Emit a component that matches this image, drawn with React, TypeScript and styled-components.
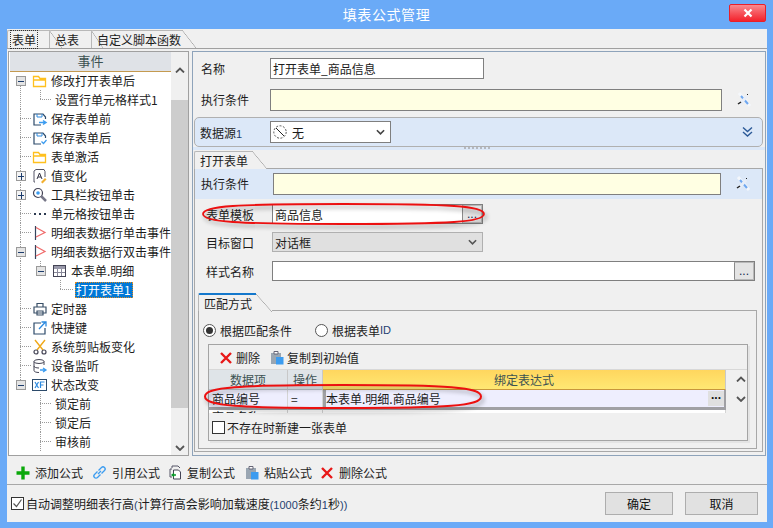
import React from 'react';
import styled, { createGlobalStyle } from 'styled-components';

const GlobalStyle = createGlobalStyle`
  html, body { margin: 0; padding: 0; background: #f0f0f0; }
  body { font-family: "Noto Sans CJK SC", "Liberation Sans", sans-serif; font-size: 12px; color: #1c1c1c; }
  * { box-sizing: border-box; }
`;

const Window = styled.div`
  width: 773px;
  height: 528px;
  background: #6aaaf7;
  display: flex;
  flex-direction: column;
  overflow: hidden;
`;
const TitleBar = styled.div`
  height: 29px;
  flex: none;
  display: flex;
  align-items: flex-start;
  justify-content: center;
  position: relative;
  color: #fff;
  font-size: 14px;
  line-height: 28px;
  letter-spacing: 0.6px;
`;
const CloseButton = styled.div`
  position: absolute;
  left: 729px;
  top: 4px;
  width: 37px;
  height: 18px;
  border: 1px solid #e8202a;
  border-radius: 2px;
  background: linear-gradient(#f98a8f, #f6545b 50%, #f4222c);
  display: flex;
  align-items: center;
  justify-content: center;
`;
const Client = styled.div`
  width: 760px;
  height: 493px;
  margin-left: 7px;
  background: #f0f0f0;
  display: flex;
  flex-direction: column;
`;
const TabStrip = styled.div`
  height: 20px;
  flex: none;
  display: flex;
  align-items: flex-end;
  border-bottom: 1px solid #a0a0a0;
`;
const Tab = styled.div<{ $w: number; $slant?: number; $accent?: boolean }>`
  width: ${(p) => p.$w}px;
  height: 18px;
  flex: none;
  position: relative;
  padding-left: 5px;
  line-height: 18px;
  white-space: nowrap;
  border-left: 1px solid #b8b8b8;
  border-top: ${(p) => (p.$accent ? '2px solid #1478cc' : '1px solid #b8b8b8')};
  border-top-left-radius: 2px;
  &::after {
    content: '';
    position: absolute;
    right: -${(p) => p.$slant ?? 16}px;
    top: -1px;
    width: ${(p) => p.$slant ?? 16}px;
    height: 18px;
    background: linear-gradient(to top right, transparent calc(50% - 0.6px), #a8a8a8 50%, transparent calc(50% + 0.6px));
  }
`;
const FocusText = styled.span`
  outline: 1px dotted #333;
  padding: 0 1px;
  margin-left: -2px;
`;
const Main = styled.div`
  height: 405px;
  flex: none;
  margin-top: 2px;
  padding: 0 1px;
  display: flex;
  gap: 3px;
`;
const TreePanel = styled.div`
  width: 181px;
  flex: none;
  border: 1px solid #a0a0a0;
  background: #fff;
  display: flex;
  overflow: hidden;
`;
const TreeColumn = styled.div`
  width: 162px;
  flex: none;
  overflow: hidden;
`;
const TreeHeader = styled.div`
  height: 20px;
  margin-left: 1px;
  margin-bottom: -1px;
  background: #dfe2e7;
  border-bottom: 1px solid #c49a50;
  text-align: center;
  line-height: 18px;
  color: #3c5252;
  font-size: 13px;
`;
const TreeRow = styled.div`
  height: 19px;
  display: flex;
  align-items: center;
  white-space: nowrap;
`;
const IconSlot = styled.span`
  width: 19px;
  height: 19px;
  flex: none;
  display: flex;
  align-items: center;
`;
const Selected = styled.span`
  background: #0078d7;
  color: #fff;
  outline: 1px dotted #e08a20;
  outline-offset: -1px;
  height: 16px;
  line-height: 16px;
  padding: 0 2px 0 1px;
`;
const ScrollBar = styled.div`
  flex: 1;
  background: #f0f0f0;
  display: flex;
  flex-direction: column;
  align-items: center;
`;
const ScrollUp = styled.div`
  height: 48px;
  flex: none;
  padding-top: 7px;
`;
const ScrollThumb = styled.div`
  height: 308px;
  width: 100%;
  flex: none;
  background: #cdcdcd;
`;
const ScrollDown = styled.div`
  flex: 1;
  display: flex;
  align-items: flex-end;
  padding-bottom: 4px;
`;
const RightPanel = styled.div`
  flex: none;
  width: 574px;
  border: 1px solid #8ea3ba;
  padding-top: 6px;
  display: flex;
  flex-direction: column;
`;
const FormRow = styled.div<{ $top?: number; $left?: number }>`
  display: flex;
  align-items: center;
  position: relative;
  margin-top: ${(p) => p.$top ?? 0}px;
  padding-left: ${(p) => p.$left ?? 8}px;
`;
const Label = styled.div<{ $w: number; $lift?: boolean }>`
  width: ${(p) => p.$w}px;
  flex: none;
  white-space: nowrap;
  margin-top: ${(p) => (p.$lift ? -2 : 0)}px;
`;
const Latin = styled.span`
  font-family: "Liberation Sans", sans-serif;
  font-size: 11px;
  color: #1f3f70;
`;
const Field = styled.div<{ $w: number; $h?: number; $tone?: 'note' | 'plain' | 'off' }>`
  width: ${(p) => p.$w}px;
  height: ${(p) => p.$h ?? 21}px;
  flex: none;
  border: 1px solid ${(p) => (p.$tone === 'off' ? '#b0b0b0' : '#7f7f7f')};
  background: ${(p) => (p.$tone === 'note' ? '#ffffe3' : p.$tone === 'off' ? '#e0e0e0' : '#fff')};
  display: flex;
  align-items: center;
  padding-left: 2px;
  justify-content: space-between;
  white-space: nowrap;
`;
const MoreButton = styled.div`
  width: 20px;
  height: 100%;
  flex: none;
  background: #e4e4e4;
  border: 1px solid #b8b8b8;
  border-left-color: #8a8a8a;
  text-align: center;
  line-height: 17px;
  font-family: "Liberation Sans", sans-serif;
  font-size: 12px;
  color: #12284c;
`;
const WandSlot = styled.span`
  margin-left: 14px;
  display: flex;
`;
const BlueStrip = styled.div`
  margin-top: 6px;
  padding: 0 2px 3px 1px;
  background: linear-gradient(#f0f0f0 30px, #dce8f8 30px);
  position: relative;
`;
const DataBand = styled.div`
  height: 30px;
  border: 1px solid #b0b0b0;
  border-radius: 5px;
  background: #dce8f8;
  display: flex;
  align-items: center;
  padding-left: 5px;
  padding-right: 8px;
  justify-content: space-between;
`;
const BandLeft = styled.div`
  display: flex;
  align-items: center;
`;
const Splitter = styled.div`
  position: absolute;
  left: 271px;
  bottom: 0;
  width: 26px;
  height: 3px;
  border-top: 2px dotted #b4b8c0;
`;
const ComboText = styled.span`
  display: flex;
  align-items: center;
  gap: 5px;
`;
const ComboArrow = styled.span`
  display: flex;
  padding-right: 5px;
`;
const TabArea = styled.div`
  flex: 1;
  margin: 0 2px 3px 1px;
  display: flex;
  flex-direction: column;
`;
const TabHead = styled.div`
  height: 19px;
  flex: none;
  display: flex;
  align-items: flex-end;
`;
const TabLine = styled.div<{ $gap: number }>`
  flex: 1;
  height: 1px;
  margin-left: ${(p) => p.$gap}px;
  background: #a8a8a8;
`;
const TabBody = styled.div`
  flex: 1;
  border: 1px solid #a8a8a8;
  border-top: none;
  display: flex;
  flex-direction: column;
  min-height: 0;
`;
const NoteBand = styled.div`
  height: 30px;
  flex: none;
  background: #dce8f8;
  display: flex;
  align-items: center;
  padding-left: 6px;
`;
const SubArea = styled.div`
  margin: 11px 5px 2px 3px;
  flex: 1;
  display: flex;
  flex-direction: column;
  min-height: 0;
`;
const SubBody = styled.div`
  flex: 1;
  border: 1px solid #a8a8a8;
  border-top: none;
  padding: 11px 8px 7px 9px;
  display: flex;
  flex-direction: column;
`;
const RadioRow = styled.div`
  height: 16px;
  flex: none;
  margin-left: -5px;
  display: flex;
  align-items: center;
`;
const Radio = styled.span<{ $on?: boolean; $gap?: number }>`
  width: 13px;
  height: 13px;
  flex: none;
  border-radius: 50%;
  border: 1px solid #555;
  background: #fff;
  position: relative;
  margin-left: ${(p) => p.$gap ?? 0}px;
  margin-right: 4px;
  &::after {
    content: '';
    display: ${(p) => (p.$on ? 'block' : 'none')};
    position: absolute;
    left: 2px;
    top: 2px;
    width: 7px;
    height: 7px;
    border-radius: 50%;
    background: #333;
  }
`;
const InnerBox = styled.div`
  margin-top: 6px;
  height: 97px;
  flex: none;
  border: 1px solid #a4a4a4;
  box-shadow: 2px 2px 0 #e4e4e4;
  display: flex;
  flex-direction: column;
`;
const GridBar = styled.div`
  height: 24px;
  flex: none;
  padding: 1px 0 0 10px;
  display: flex;
  align-items: center;
`;
const BarItem = styled.span<{ $gap?: number }>`
  display: flex;
  align-items: center;
  gap: 3px;
  margin-left: ${(p) => p.$gap ?? 0}px;
  white-space: nowrap;
`;
const GridWrap = styled.div`
  height: 44px;
  flex: none;
  display: flex;
  position: relative;
  border-top: 1px solid #d8d8d8;
`;
const GridTable = styled.div`
  width: 517px;
  flex: none;
  background: #fff;
  overflow: hidden;
  display: grid;
  grid-template-columns: 79px 35px 403px;
  grid-template-rows: 20px 20px 20px;
`;
const HeadCell = styled.div<{ $hot?: boolean }>`
  background: ${(p) => (p.$hot ? 'linear-gradient(#ffd65e, #ffe873)' : '#dfe4e8')};
  border-right: 1px solid #c8c8c8;
  border-bottom: 1px solid ${(p) => (p.$hot ? '#c8963c' : '#b8c0c8')};
  text-align: center;
  line-height: 19px;
  color: #3c5252;
`;
const BodyCell = styled.div<{ $active?: boolean }>`
  background: #eeeefe;
  border-right: 1px solid #d4d4d4;
  border-bottom: 3px solid #a0a0a4;
  padding-left: ${(p) => (p.$active ? 0 : 3)}px;
  line-height: 17px;
  display: flex;
  justify-content: space-between;
  ${(p) => p.$active && 'border-left: 3px solid #a0a0a4; border-right: 2px solid #a0a0a4;'}
`;
const CellMore = styled.div`
  width: 16px;
  height: 15px;
  margin-top: 1px;
  background: #e0e0e0;
  color: #111;
  text-align: center;
  font: bold 12px/8px "Liberation Sans", sans-serif;
`;
const PeekCell = styled.div`
  border-right: 1px solid #d4d4d4;
  line-height: 13px;
  padding-left: 3px;
`;
const GridScroll = styled.div`
  width: 22px;
  flex: none;
  display: flex;
  flex-direction: column;
  align-items: center;
  padding: 6px 0 0 8px;
  gap: 14px;
`;
const CheckRow = styled.div<{ $left?: number; $top?: number }>`
  display: flex;
  align-items: center;
  margin-top: ${(p) => p.$top ?? 0}px;
  padding-left: ${(p) => p.$left ?? 0}px;
  white-space: nowrap;
  gap: 2px;
`;
const CheckBox = styled.span`
  width: 13px;
  height: 13px;
  flex: none;
  border: 1px solid #333;
  background: #fff;
  display: flex;
`;
const ActionBar = styled.div`
  height: 29px;
  flex: none;
  padding-left: 9px;
  padding-top: 5px;
  display: flex;
  align-items: center;
  border-bottom: 1px solid #a8a8a8;
`;
const Action = styled.span<{ $w: number }>`
  width: ${(p) => p.$w}px;
  flex: none;
  display: flex;
  align-items: center;
  gap: 5px;
  white-space: nowrap;
`;
const Footer = styled.div`
  flex: 1;
  display: flex;
  align-items: center;
  padding: 0 9px 0 4px;
  justify-content: space-between;
`;
const FooterButtons = styled.div`
  display: flex;
  gap: 12px;
`;
const Button = styled.div<{ $w: number }>`
  width: ${(p) => p.$w}px;
  height: 23px;
  border: 1px solid #adadad;
  background: #e1e1e1;
  text-align: center;
  line-height: 21px;
  color: #111;
`;
const Ring = styled.svg<{ $x: number; $y: number }>`
  position: absolute;
  left: ${(p) => p.$x}px;
  top: ${(p) => p.$y}px;
  pointer-events: none;
  overflow: visible;
  filter: drop-shadow(2px 3px 2px rgba(0, 0, 0, 0.35));
`;

type IconName = 'folder' | 'saveIn' | 'saveOk' | 'value' | 'tool' | 'dots' | 'flag' | 'grid' | 'timer' | 'jump' | 'scissors' | 'db' | 'xf';

const Glyph = ({ name }: { name: IconName }) => {
  const common = { width: 16, height: 16, viewBox: '0 0 16 16', fill: 'none' as const };
  switch (name) {
    case 'folder':
      return (
        <svg {...common}>
          <path d="M1.500 13.500V3.500h5l1.500 2h5.500v8zM1.500 7h12" stroke="#ffc01e" strokeWidth="1.300" />
        </svg>
      );
    case 'saveIn':
    case 'saveOk':
      return (
        <svg {...common}>
          <path d="M9 14H2V3h9l2.500 3v2" stroke="#2c4a6a" strokeWidth="1.200" />
          <path d="M5 3v3h5V3" stroke="#2c8ae0" />
          {name === 'saveIn' ? (
            <path d="M7 11.500h6M11 9.500l3 2-3 2" stroke="#3c9cf0" strokeWidth="1.500" />
          ) : (
            <path d="M9.500 11.500l2 2 3-3.500" stroke="#3c9cf0" strokeWidth="1.200" />
          )}
        </svg>
      );
    case 'value':
      return (
        <svg {...common}>
          <path d="M3 14H2V3l2-1.500h8l1 2V9" stroke="#556" />
          <path d="M5 11l2.500-6 2.500 6M6 9h3" stroke="#334" />
          <path d="M9 14l4-4 1.500 1.500-4 4z" fill="#f2b030" />
        </svg>
      );
    case 'tool':
      return (
        <svg {...common}>
          <circle cx="6" cy="6" r="4.500" stroke="#445" strokeWidth="1.200" />
          <circle cx="6" cy="6" r="1.800" fill="#3c9cf0" />
          <path d="M9 9l5 5" stroke="#778" strokeWidth="2.500" />
        </svg>
      );
    case 'dots':
      return (
        <svg {...common}>
          <path d="M2 8h2M7 8h2M12 8h2" stroke="#2c3a50" strokeWidth="2" />
        </svg>
      );
    case 'flag':
      return (
        <svg {...common}>
          <path d="M3.500 1v14" stroke="#35445c" strokeWidth="1.200" />
          <path d="M4 2.500L13 7.500 4 12" stroke="#f06a6a" strokeWidth="1.200" />
        </svg>
      );
    case 'grid':
      return (
        <svg {...common} shapeRendering="crispEdges">
          <rect x="1.500" y="2.500" width="12" height="11" stroke="#445" />
          <rect x="2" y="3" width="11" height="2.500" fill="#99a" />
          <path d="M5.500 6v7M9.500 6v7M2 9.500h11" stroke="#889" />
        </svg>
      );
    case 'timer':
      return (
        <svg {...common}>
          <path d="M2 6h12v6H2zM5 6V2.500h6V6M5 10h6v4H5z" stroke="#3a5068" strokeWidth="1.200" />
        </svg>
      );
    case 'jump':
      return (
        <svg {...common}>
          <path d="M9 3H2v11h11V8" stroke="#2c4a6a" strokeWidth="1.200" />
          <path d="M7 9l6.500-7M9.500 2h4.500v4.500" stroke="#2c8ae0" strokeWidth="1.300" />
        </svg>
      );
    case 'scissors':
      return (
        <svg {...common}>
          <path d="M3 1l8 10M13 1L5 11" stroke="#f0a818" strokeWidth="1.400" />
          <circle cx="4" cy="13" r="2" stroke="#445" strokeWidth="1.200" />
          <circle cx="12" cy="13" r="2" stroke="#445" strokeWidth="1.200" />
        </svg>
      );
    case 'db':
      return (
        <svg {...common}>
          <ellipse cx="7" cy="3.500" rx="5" ry="2" stroke="#445" />
          <path d="M2 3.500v9c0 1.200 2 2 5 2M12 3.500V7M2 8c0 1.200 2 2 5 2" stroke="#445" />
          <path d="M8 12h5M11 10l3 2-3 2" stroke="#3c9cf0" strokeWidth="1.300" />
        </svg>
      );
    case 'xf':
      return (
        <svg width="15" height="12" viewBox="0 0 15 12" fill="none">
          <rect x="0.500" y="0.500" width="14" height="11" stroke="#2c4a6a" />
          <path d="M3 3l3.500 6M6.500 3L3 9" stroke="#2c8ae0" strokeWidth="1.200" />
          <path d="M8.500 9V3h4M8.500 6h3" stroke="#2c8ae0" strokeWidth="1.200" />
        </svg>
      );
  }
};

type Row = {
  text: string;
  indent: number;
  icon?: IconName;
  box?: '+' | '-';
  boxX?: number;
  drop?: number[];
  rise?: number;
  stub?: [number, number];
  noTrunk?: boolean;
  selected?: boolean;
};

const ROWS: Row[] = [
  { text: '修改打开表单后', indent: 23, icon: 'folder', box: '-', boxX: 11 },
  { text: '设置行单元格样式1', indent: 46, rise: 31, stub: [31, 43] },
  { text: '保存表单前', indent: 23, icon: 'saveIn', stub: [11, 22] },
  { text: '保存表单后', indent: 23, icon: 'saveOk', stub: [11, 22] },
  { text: '表单激活', indent: 23, icon: 'folder', stub: [11, 22] },
  { text: '值变化', indent: 23, icon: 'value', box: '+', boxX: 11 },
  { text: '工具栏按钮单击', indent: 23, icon: 'tool', box: '+', boxX: 11 },
  { text: '单元格按钮单击', indent: 23, icon: 'dots', stub: [11, 22] },
  { text: '明细表数据行单击事件', indent: 23, icon: 'flag', stub: [11, 22] },
  { text: '明细表数据行双击事件', indent: 23, icon: 'flag', box: '-', boxX: 11 },
  { text: '本表单.明细', indent: 43, icon: 'grid', box: '-', boxX: 31 },
  { text: '打开表单1', indent: 66, selected: true, rise: 51, stub: [51, 64] },
  { text: '定时器', indent: 23, icon: 'timer', stub: [11, 22] },
  { text: '快捷键', indent: 23, icon: 'jump', stub: [11, 22] },
  { text: '系统剪贴板变化', indent: 23, icon: 'scissors', stub: [11, 22] },
  { text: '设备监听', indent: 23, icon: 'db', stub: [11, 22] },
  { text: '状态改变', indent: 23, icon: 'xf', box: '-', boxX: 11 },
  { text: '锁定前', indent: 46, noTrunk: true, drop: [31], stub: [31, 43] },
  { text: '锁定后', indent: 46, noTrunk: true, drop: [31], stub: [31, 43] },
  { text: '审核前', indent: 46, noTrunk: true, drop: [31], stub: [31, 43] },
];

const Guides = ({ row, index }: { row: Row; index: number }) => {
  const dash = { stroke: '#9a9a9a', strokeDasharray: '1 1' };
  const trunkTop = index === 0 ? 9 : 0;
  const trunkBottom = row.text === '状态改变' ? 9 : 19;
  return (
    <svg width={row.indent} height={19} style={{ flex: 'none' }} shapeRendering="crispEdges">
      {!row.noTrunk && <line x1={11.5} x2={11.5} y1={trunkTop} y2={trunkBottom} {...dash} />}
      {row.rise !== undefined && <line x1={row.rise + 0.5} x2={row.rise + 0.5} y1={0} y2={9} {...dash} />}
      {row.drop?.map((x) => <line key={x} x1={x + 0.5} x2={x + 0.5} y1={0} y2={19} {...dash} />)}
      {row.stub && <line x1={row.stub[0]} x2={row.stub[1]} y1={9.5} y2={9.5} {...dash} />}
      {row.boxX === 31 && <line x1={31.5} x2={31.5} y1={0} y2={5} {...dash} />}
      {row.box && row.boxX !== undefined && (
        <g>
          <rect x={row.boxX - 4 + 0.5} y={5.5} width={9} height={9} fill={row.box === '-' ? '#e4e4e4' : '#f4f4f4'} stroke="#9a9a9a" />
          <line x1={row.boxX - 2} x2={row.boxX + 4} y1={10.5} y2={10.5} stroke="#1c3c6c" />
          {row.box === '+' && <line x1={row.boxX + 1.5} x2={row.boxX + 1.5} y1={7} y2={14} stroke="#1c3c6c" />}
        </g>
      )}
    </svg>
  );
};

// hand drawn ring: flatter on top than a true ellipse
const ringPath = (w: number, h: number) => {
  const c = h / 2;
  return `M1 ${c} C1 3 34 1 ${w / 2} 1 C${w - 34} 1 ${w - 1} 3 ${w - 1} ${c} C${w - 1} ${h - 3} ${w - 34} ${h - 1} ${w / 2} ${h - 1} C34 ${h - 1} 1 ${h - 3} 1 ${c} Z`;
};

const Chevron = ({ up, color = '#555', w = 10 }: { up?: boolean; color?: string; w?: number }) => (
  <svg width={w} height={6} viewBox="0 0 10 6" fill="none">
    <path d={up ? 'M1 5.500L5 1.500 9 5.500' : 'M1 1L5 5 9 1'} stroke={color} strokeWidth="1.800" />
  </svg>
);

const Wand = () => (
  <svg width="16" height="16" viewBox="0 0 16 16" fill="none">
    <path d="M3 1l11 13" stroke="#f4f7fb" strokeWidth="3" />
    <path d="M5 4l7 8" stroke="#70a8f0" strokeWidth="2" />
    <path d="M11 4l-7 8" stroke="#e8eef8" strokeWidth="3" />
    <path d="M2 12l3-2" stroke="#222" strokeWidth="1.500" />
    <path d="M11 2l1 1" stroke="#222" />
  </svg>
);

const RedCross = () => (
  <svg width="14" height="14" viewBox="0 0 14 14" fill="none">
    <path d="M2 2l10 10M12 2L2 12" stroke="#e81818" strokeWidth="2.400" />
  </svg>
);

const NoSign = () => (
  <svg width="14" height="14" viewBox="0 0 14 14" fill="none">
    <circle cx="7" cy="7" r="6.200" stroke="#555" strokeDasharray="2 1.500" />
    <path d="M3 3l8 8" stroke="#222" />
  </svg>
);

const Plus = () => (
  <svg width="14" height="14" viewBox="0 0 14 14" fill="none">
    <path d="M7 0.500v13M0.500 7h13" stroke="#0aa80a" strokeWidth="3.400" />
  </svg>
);

const LinkIcon = () => (
  <svg width="15" height="15" viewBox="0 0 15 15" fill="none">
    <path d="M6 9l3-3M5.500 6.500l-3 3a2.100 2.100 0 0 0 3 3l3-3M9.500 8.500l3-3a2.100 2.100 0 0 0-3-3l-3 3" stroke="#3c9cf0" strokeWidth="1.300" />
  </svg>
);

const CopyIcon = () => (
  <svg width="13" height="15" viewBox="0 0 13 15" fill="none">
    <path d="M3 3V1h6l2 2M3 4H1v8h2" stroke="#556" />
    <path d="M4.500 5h5l2 2v7h-7z" fill="#fff" stroke="#445" />
    <path d="M3 10h4M5 8.500L3 10l2 1.500" stroke="#0a9a2a" strokeWidth="1.300" />
  </svg>
);

const PasteIcon = () => (
  <svg width="14" height="15" viewBox="0 0 14 15" fill="none">
    <path d="M1 3h10v11H1z" fill="#9aa6b2" />
    <path d="M4 1.500h4V4H4z" fill="#fff" stroke="#667" />
    <path d="M6 7h7.500v7.500H6z" fill="#3c9cf0" />
  </svg>
);

const App = () => (
  <Window>
    <GlobalStyle />
    <TitleBar>
      填表公式管理
      <CloseButton>
        <svg width="10" height="10" viewBox="0 0 10 10" fill="none">
          <path d="M1.500 1.500l7 7M8.500 1.500l-7 7" stroke="#fff" strokeWidth="2.200" />
        </svg>
      </CloseButton>
    </TitleBar>
    <Client>
      <TabStrip>
        <Tab $w={42} $slant={13}>
          <FocusText>表单</FocusText>
        </Tab>
        <Tab $w={42} $slant={12}>总表</Tab>
        <Tab $w={91} $slant={14}>自定义脚本函数</Tab>
      </TabStrip>
      <Main>
        <TreePanel>
          <TreeColumn>
            <TreeHeader>事件</TreeHeader>
            {ROWS.map((row, i) => (
              <TreeRow key={row.text + i}>
                <Guides row={row} index={i} />
                {row.icon && (
                  <IconSlot>
                    <Glyph name={row.icon} />
                  </IconSlot>
                )}
                {row.selected ? <Selected>{row.text}</Selected> : row.text}
              </TreeRow>
            ))}
          </TreeColumn>
          <ScrollBar>
            <ScrollUp>
              <Chevron up />
            </ScrollUp>
            <ScrollThumb />
            <ScrollDown>
              <Chevron />
            </ScrollDown>
          </ScrollBar>
        </TreePanel>
        <RightPanel>
          <FormRow>
            <Label $w={69}>名称</Label>
            <Field $w={214}>打开表单_商品信息</Field>
          </FormRow>
          <FormRow $top={10}>
            <Label $w={69} $lift>执行条件</Label>
            <Field $w={452} $h={22} $tone="note" />
            <WandSlot>
              <Wand />
            </WandSlot>
          </FormRow>
          <BlueStrip>
            <DataBand>
              <BandLeft>
                <Label $w={70}>
                  数据源<Latin>1</Latin>
                </Label>
                <Field $w={121} $h={22}>
                  <ComboText>
                    <NoSign />无
                  </ComboText>
                  <ComboArrow>
                    <Chevron color="#444" w={9} />
                  </ComboArrow>
                </Field>
              </BandLeft>
              <svg width="13" height="12" viewBox="0 0 13 12" fill="none">
                <path d="M2 1.500l4.500 4 4.500-4M2 6l4.500 4 4.500-4" stroke="#2c5a98" strokeWidth="1.400" />
              </svg>
            </DataBand>
            <Splitter />
          </BlueStrip>
          <TabArea>
            <TabHead>
              <Tab $w={58} $slant={15}>打开表单</Tab>
              <TabLine $gap={15} />
            </TabHead>
            <TabBody>
              <NoteBand>
                <Label $w={72} $lift>执行条件</Label>
                <Field $w={448} $h={22} $tone="note" />
                <WandSlot>
                  <Wand />
                </WandSlot>
              </NoteBand>
              <FormRow $top={5} $left={11}>
                <Label $w={66}>表单模板</Label>
                <Field $w={211} $h={20}>
                  商品信息
                  <MoreButton>...</MoreButton>
                </Field>
                <Ring $x={7} $y={-1} width={283} height={22}>
                  <path d={ringPath(283, 22)} fill="none" stroke="#ec1010" strokeWidth="1.800" />
                </Ring>
              </FormRow>
              <FormRow $top={8} $left={11}>
                <Label $w={66}>目标窗口</Label>
                <Field $w={211} $h={20} $tone="off">
                  对话框
                  <ComboArrow>
                    <Chevron color="#555" w={9} />
                  </ComboArrow>
                </Field>
              </FormRow>
              <FormRow $top={9} $left={11}>
                <Label $w={66}>样式名称</Label>
                <Field $w={483} $h={20}>
                  <span />
                  <MoreButton>...</MoreButton>
                </Field>
              </FormRow>
              <SubArea>
                <TabHead>
                  <Tab $w={58} $slant={16} $accent>匹配方式</Tab>
                  <TabLine $gap={16} />
                </TabHead>
                <SubBody>
                  <RadioRow>
                    <Radio $on />
                    根据匹配条件
                    <Radio $gap={23} />
                    根据表单<Latin>ID</Latin>
                  </RadioRow>
                  <InnerBox>
                    <GridBar>
                      <BarItem>
                        <RedCross />删除
                      </BarItem>
                      <BarItem $gap={10}>
                        <PasteIcon />复制到初始值
                      </BarItem>
                    </GridBar>
                    <GridWrap>
                      <GridTable>
                        <HeadCell>数据项</HeadCell>
                        <HeadCell>操作</HeadCell>
                        <HeadCell $hot>绑定表达式</HeadCell>
                        <BodyCell>商品编号</BodyCell>
                        <BodyCell>=</BodyCell>
                        <BodyCell $active>
                          本表单.明细.商品编号
                          <CellMore>...</CellMore>
                        </BodyCell>
                        <PeekCell>商品名称</PeekCell>
                        <PeekCell />
                        <PeekCell />
                      </GridTable>
                      <GridScroll>
                        <Chevron up />
                        <Chevron />
                      </GridScroll>
                      <Ring $x={-5} $y={14} width={278} height={25}>
                        <path d={ringPath(278, 25)} fill="none" stroke="#ec1010" strokeWidth="2" />
                      </Ring>
                    </GridWrap>
                    <CheckRow $left={3} $top={6}>
                      <CheckBox />
                      不存在时新建一张表单
                    </CheckRow>
                  </InnerBox>
                </SubBody>
              </SubArea>
            </TabBody>
          </TabArea>
        </RightPanel>
      </Main>
      <ActionBar>
        <Action $w={76}>
          <Plus />添加公式
        </Action>
        <Action $w={77}>
          <LinkIcon />引用公式
        </Action>
        <Action $w={76}>
          <CopyIcon />复制公式
        </Action>
        <Action $w={75}>
          <PasteIcon />粘贴公式
        </Action>
        <Action $w={80}>
          <RedCross />删除公式
        </Action>
      </ActionBar>
      <Footer>
        <CheckRow>
          <CheckBox>
            <svg width="11" height="11" viewBox="0 0 11 11" fill="none">
              <path d="M1.500 5.500l3 3 5-7" stroke="#555" strokeWidth="1.200" />
            </svg>
          </CheckBox>
          <span>
            自动调整明细表行高<Latin>(</Latin>计算行高会影响加载速度<Latin>(1000</Latin>条约<Latin>1</Latin>秒<Latin>))</Latin>
          </span>
        </CheckRow>
        <FooterButtons>
          <Button $w={68}>确定</Button>
          <Button $w={73}>取消</Button>
        </FooterButtons>
      </Footer>
    </Client>
  </Window>
);

export default App;
